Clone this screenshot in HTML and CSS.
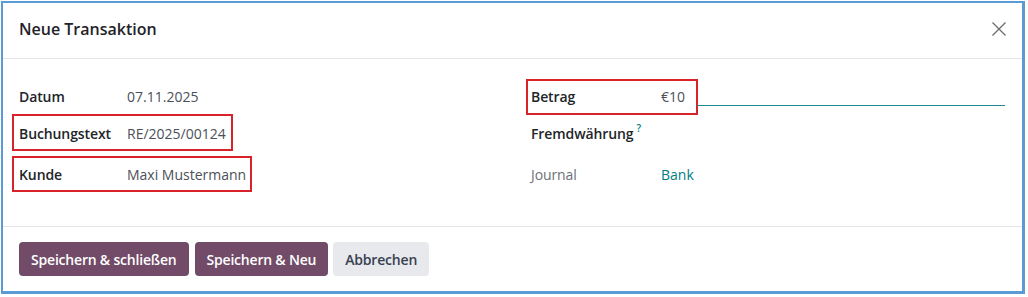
FILE: index.html
```html
<!DOCTYPE html>
<html lang="de">
<head>
  <meta charset="UTF-8" />
  <title>Neue Transaktion</title>
  <link rel="stylesheet" href="styles.css">
</head>
<body>

  <div class="dialog">
    <div class="dialog-header">
      <h4 class="dialog-title">Neue Transaktion</h4>
      <button class="btn-close" aria-label="Schließen">
        <svg width="16" height="16" viewBox="0 0 16 16">
          <path d="M1.5 1.5 L14.5 14.5 M14.5 1.5 L1.5 14.5" stroke="#6b6b6b" stroke-width="1.3" fill="none"/>
        </svg>
      </button>
    </div>

    <div class="dialog-body">
      <div class="group group-left">
        <div class="field row-1">
          <span class="field-inner">
            <label class="label">Datum</label>
            <span class="value">07.11.2025</span>
          </span>
        </div>
        <div class="field row-2">
          <span class="field-inner marked mark-text">
            <label class="label">Buchungstext</label>
            <span class="value">RE/2025/00124</span>
          </span>
        </div>
        <div class="field row-3">
          <span class="field-inner marked mark-partner">
            <label class="label">Kunde</label>
            <span class="value">Maxi Mustermann</span>
          </span>
        </div>
      </div>

      <div class="group group-right">
        <div class="field row-1">
          <span class="field-inner marked mark-amount">
            <label class="label">Betrag</label>
            <span class="value">€10</span>
          </span>
          <span class="input-line"></span>
        </div>
        <div class="field row-2">
          <span class="field-inner">
            <label class="label">Fremdwährung<sup class="help">?</sup></label>
          </span>
        </div>
        <div class="field row-3">
          <span class="field-inner">
            <label class="label muted">Journal</label>
            <span class="value link">Bank</span>
          </span>
        </div>
      </div>
    </div>

    <div class="dialog-footer">
      <button class="btn btn-primary">Speichern &amp; schließen</button>
      <button class="btn btn-primary">Speichern &amp; Neu</button>
      <button class="btn btn-secondary">Abbrechen</button>
    </div>
  </div>

</body>
</html>
```

FILE: styles.css
```css
body {
  margin: 0;
  padding: 1px 0 0 1px;
  background: #ffffff;
  font-family: "Open Sans", "Noto Sans", Arial, sans-serif;
  color: #212529;
}

.dialog {
  width: 1019px;
  height: 288px;
  border: 3px solid #5b9bd5;
  border-top-width: 2px;
  border-left-width: 2px;
  background: #ffffff;
  display: flex;
  flex-direction: column;
}

.dialog-header {
  height: 51px;
  display: flex;
  align-items: center;
  justify-content: space-between;
  padding: 0 15px 4px 16px;
  border-bottom: 1px solid #e3e5e8;
}

.dialog-title {
  margin: 0;
  font-size: 16px;
  font-weight: 600;
  color: #1f2329;
}

.btn-close {
  border: none;
  background: none;
  padding: 0;
  width: 16px;
  height: 16px;
  cursor: pointer;
}

.dialog-body {
  display: grid;
  grid-template-columns: 478px 474px;
  column-gap: 34px;
  padding: 19px 15px 0 16px;
  height: 148px;
  border-bottom: 1px solid #e3e5e8;
}

.field {
  display: flex;
  align-items: center;
  position: relative;
}

.row-1 { height: 36px; }
.row-2 { height: 39px; }
.row-3 { height: 43px; }

.field-inner {
  display: inline-flex;
  align-items: center;
  position: relative;
  font-size: 14px;
}

.group-left .label {
  width: 108px;
}

.group-right .label {
  width: 130px;
}

.label {
  font-weight: 600;
  color: #212529;
  letter-spacing: -0.1px;
}

.label.muted {
  font-weight: 400;
  color: #6c7079;
}

.value {
  color: #4b5059;
}

.value.link {
  color: #017e84;
}

.help {
  color: #017e84;
  font-size: 10px;
  font-weight: 600;
  margin-left: 3px;
  vertical-align: 7px;
  line-height: 0;
}

.input-line {
  position: absolute;
  left: 166px;
  right: 0;
  bottom: 8px;
  border-bottom: 1px solid #1f8a90;
}

/* red annotation boxes */
.marked::after {
  content: "";
  position: absolute;
  border: 2px solid #d8232a;
  pointer-events: none;
}

.mark-text::after {
  left: -7px;
  right: -7px;
  top: -10px;
  bottom: -8px;
}

.mark-partner::after {
  left: -7px;
  right: -6px;
  top: -9px;
  bottom: -8px;
}

.mark-amount::after {
  left: -5px;
  right: -7px;
  top: -8px;
  bottom: -9px;
}

.mark-amount .value {
  width: 30px;
}

.dialog-footer {
  display: flex;
  align-items: center;
  gap: 6px;
  padding: 0 16px;
  flex: 1;
}

.btn {
  height: 34px;
  padding: 0 12px;
  border: none;
  border-radius: 4px;
  font-family: "Open Sans", "Noto Sans", Arial, sans-serif;
  font-size: 14px;
  font-weight: 600;
  letter-spacing: -0.2px;
  cursor: pointer;
}

.btn-primary {
  background: #714b67;
  color: #ffffff;
}

.btn-secondary {
  background: #e7e9ed;
  color: #374151;
  margin-left: -1px;
}
```
